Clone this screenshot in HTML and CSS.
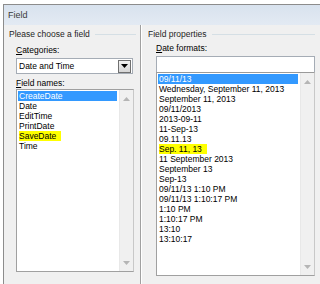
FILE: index.html
```html
<!DOCTYPE html>
<html>
<head>
<meta charset="utf-8">
<link rel="stylesheet" href="styles.css">
</head>
<body>
<div class="window">
  <div class="titlebar">Field</div>
  <div class="content">
    <div class="col col-left">
      <div class="group-title"><span>Please choose a field</span><span class="rule"></span></div>
      <div class="inner inner-left">
        <div class="label lbl-cat"><u>C</u>ategories:</div>
        <div class="combo">
          <span class="combo-text">Date and Time</span>
          <span class="dd-btn"><svg width="7" height="4" viewBox="0 0 7 4"><path d="M0 0h7L3.5 4z" fill="#000"/></svg></span>
        </div>
        <div class="label lbl-names"><u>F</u>ield names:</div>
        <div class="listbox listbox-left">
          <ul class="items">
            <li class="sel">CreateDate</li>
            <li>Date</li>
            <li>EditTime</li>
            <li>PrintDate</li>
            <li><span class="hl">SaveDate</span></li>
            <li>Time</li>
          </ul>
          <div class="scrollbar">
            <svg class="arrow" width="7" height="4" viewBox="0 0 7 4"><path d="M0 4h7L3.5 0z" fill="#b5b5b5"/></svg>
            <svg class="arrow" width="7" height="4" viewBox="0 0 7 4"><path d="M0 0h7L3.5 4z" fill="#b5b5b5"/></svg>
          </div>
        </div>
      </div>
    </div>
    <div class="sep"></div>
    <div class="col col-right">
      <div class="group-title"><span>Field properties</span><span class="rule"></span></div>
      <div class="inner inner-right">
        <div class="label lbl-fmt"><u>D</u>ate formats:</div>
        <div class="textbox"></div>
        <div class="listbox listbox-right">
          <ul class="items">
            <li class="sel">09/11/13</li>
            <li>Wednesday, September 11, 2013</li>
            <li>September 11, 2013</li>
            <li>09/11/2013</li>
            <li>2013-09-11</li>
            <li>11-Sep-13</li>
            <li>09.11.13</li>
            <li><span class="hl">Sep. 11, 13</span></li>
            <li>11 September 2013</li>
            <li>September 13</li>
            <li>Sep-13</li>
            <li>09/11/13 1:10 PM</li>
            <li>09/11/13 1:10:17 PM</li>
            <li>1:10 PM</li>
            <li>1:10:17 PM</li>
            <li>13:10</li>
            <li>13:10:17</li>
          </ul>
          <div class="scrollbar">
            <svg class="arrow" width="7" height="4" viewBox="0 0 7 4"><path d="M0 4h7L3.5 0z" fill="#b5b5b5"/></svg>
            <svg class="arrow" width="7" height="4" viewBox="0 0 7 4"><path d="M0 0h7L3.5 4z" fill="#b5b5b5"/></svg>
          </div>
        </div>
      </div>
    </div>
  </div>
</div>
</body>
</html>
```
FILE: styles.css
```css
* { box-sizing: border-box; margin: 0; padding: 0; }
html, body { width: 320px; height: 284px; overflow: hidden; background: #ffffff; }
body {
  font-family: "Liberation Sans", Arial, sans-serif;
  font-size: 8.5px;
  line-height: 10px;
  color: #000;
  padding: 4px 0 0 3px;
}
.window {
  width: 317px;
  height: 280px;
  border-top: 1px solid #8c8c8c;
  border-left: 1px solid #8c8c8c;
  background: #f0f0f0;
  display: flex;
  flex-direction: column;
}
.titlebar {
  height: 20px;
  flex: none;
  background: linear-gradient(#d8e2ee, #e3eaf3);
  color: #3b3b3b;
  font-size: 9px;
  line-height: 20px;
  padding-left: 4px;
}
.content {
  flex: 1;
  display: flex;
  min-height: 0;
}
.col { display: flex; flex-direction: column; padding-top: 4px; }
.col-left { width: 136px; padding-left: 5px; padding-right: 4px; }
.col-right { flex: 1; padding-left: 6px; padding-right: 5px; }
.sep { width: 2px; flex: none; border-left: 1px solid #a0a0a0; border-right: 1px solid #ffffff; }
.group-title { display: flex; align-items: center; height: 10px; color: #1e1e1e; }
.group-title .rule { flex: 1; height: 1px; background: #d5dfe5; margin-left: 5px; margin-top: 1px; }
.inner { display: flex; flex-direction: column; }
.inner-left { padding-left: 7px; }
.inner-right { padding-left: 8px; }
.label { height: 10px; }
.label u { text-decoration: underline; }
.lbl-cat { margin-top: 6px; }
.lbl-names { margin-top: 4px; }
.lbl-fmt { margin-top: 4px; }
.combo {
  margin-top: 3px;
  width: 117px;
  height: 16px;
  border: 1px solid #a5acb5;
  background: #fff;
  display: flex;
  align-items: center;
  padding-left: 2px;
  padding-right: 1px;
}
.combo-text { flex: 1; }
.dd-btn {
  width: 13px;
  height: 13px;
  border: 1px solid #707070;
  background: linear-gradient(#f2f2f2, #d6d6d6);
  display: flex;
  align-items: center;
  justify-content: center;
}
.listbox {
  background: #fff;
  border: 1px solid #a0a0a0;
  border-right-color: #c8c8c8;
  display: flex;
}
.listbox-left { margin-top: 1px; width: 118px; height: 183px; border-top-color: #a0a0a0; }
.textbox {
  margin-top: 3px;
  height: 16px;
  background: #fff;
  border: 1px solid #a5acb5;
  border-bottom: none;
}
.listbox-right { height: 204px; border-top-color: #9a9a9a; }
.items { list-style: none; flex: 1; padding: 1px 0 0 1px; }
.items li { height: 10px; line-height: 10px; padding-left: 1px; white-space: nowrap; }
.items li.sel { background: #3399ff; color: #fff; margin-right: 2px; }
.hl { background: #ffff00; padding-right: 5px; }
.scrollbar {
  width: 14px;
  flex: none;
  background: #f0f0f0;
  border-left: 1px solid #e8e8e8;
  display: flex;
  flex-direction: column;
  justify-content: space-between;
  align-items: center;
  padding: 7px 0 6px;
}
.arrow { display: block; }
```
